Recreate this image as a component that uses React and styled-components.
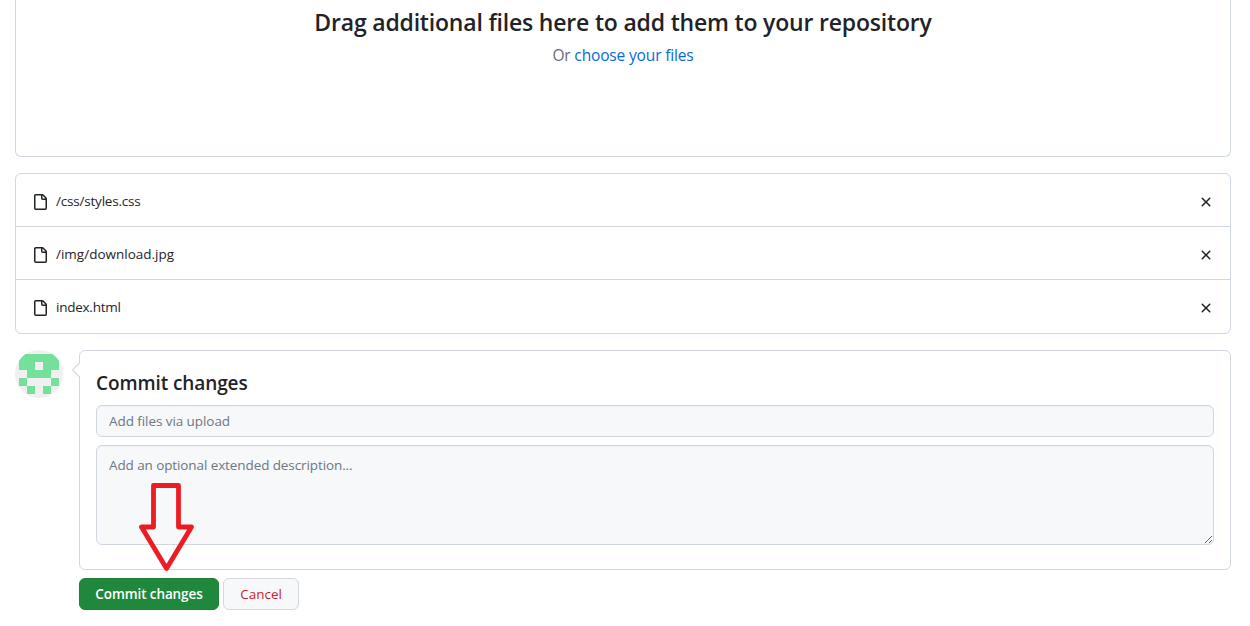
import React from 'react';
import styled, { createGlobalStyle } from 'styled-components';

const GlobalStyle = createGlobalStyle`
  *, *::before, *::after { box-sizing: border-box; }
  body {
    margin: 0;
    background: #ffffff;
    color: #1f2328;
    font: 13.5px/21px "Open Sans", "Noto Sans", sans-serif;
    overflow: hidden;
  }
`;

const Page = styled.main`
  position: relative;
  height: 626px;
  padding: 0 19px 0 15px;
  overflow: hidden;
`;

const Panel = styled.section`
  border: 1px solid #d0d7de;
  border-radius: 6px;
  background: #ffffff;
`;

const DropZone = styled(Panel)`
  height: 157px;
  padding-top: 4px;
  border-top: 0;
  border-radius: 0 0 6px 6px;
  text-align: center;
`;

const DropTitle = styled.h2`
  margin: 0;
  font-size: 23px;
  line-height: 36px;
  font-weight: 600;
  letter-spacing: ${(p) => p.$track}px;
`;

const DropHint = styled.p`
  margin: 3px 0 0;
  color: #656d76;
  font-size: 15.5px;
  line-height: 25px;
  letter-spacing: ${(p) => p.$track}px;
`;

const Link = styled.a`
  color: #0969da;
  text-decoration: none;
`;

const FileList = styled(Panel)`
  margin-top: 16px;
  height: 161px;
`;

const FileRow = styled.div`
  display: flex;
  align-items: center;
  height: 53px;
  padding: 3px 16px 0;
  & + & { border-top: 1px solid #d0d7de; }
  &:first-child { height: 52px; }
`;

const FileName = styled.span`
  flex: 1;
  margin-left: 8px;
  letter-spacing: ${(p) => p.$track}px;
`;

const IconButton = styled.button`
  display: flex;
  padding: 0;
  border: 0;
  background: none;
  color: #1f2328;
`;

const CommitArea = styled.div`
  display: flex;
  gap: 16px;
  margin-top: 16px;
`;

const Avatar = styled.svg`
  width: 48px;
  height: 48px;
  flex: none;
  border-radius: 50%;
`;

const CommitForm = styled.form`
  flex: 1;
`;

const CommitPanel = styled(Panel)`
  position: relative;
  height: 220px;
  padding: 17px 16px 0;
`;

const Caret = styled.svg`
  position: absolute;
  left: -8px;
  top: 10px;
`;

const CommitTitle = styled.h3`
  margin: 0 0 7px;
  font-size: 19px;
  line-height: 30px;
  font-weight: 600;
  letter-spacing: ${(p) => p.$track}px;
`;

const Field = styled.input`
  display: block;
  width: 100%;
  height: ${(p) => p.$height}px;
  padding: 5px 12px;
  border: 1px solid #d0d7de;
  border-radius: 6px;
  background: #f6f8fa;
  box-shadow: inset 0 1px 0 rgba(208, 215, 222, 0.2);
  font: inherit;
  line-height: 20px;
  letter-spacing: ${(p) => p.$track}px;
  resize: vertical;
  &::placeholder { color: #6e7781; opacity: 1; }
`;

const Description = styled(Field)`
  margin-top: 8px;
  padding-top: 9px;
`;

const Actions = styled.div`
  display: flex;
  gap: 4px;
  margin-top: 8px;
`;

const Button = styled.button`
  width: ${(p) => p.$width}px;
  height: 32px;
  padding: 0;
  border: 1px solid ${(p) => (p.$primary ? '#1f7f37' : '#d5d8da')};
  border-radius: 6px;
  background: ${(p) => (p.$primary ? '#1f883d' : '#f6f8fa')};
  color: ${(p) => (p.$primary ? '#ffffff' : '#cf222e')};
  font: 13.5px/20px "Open Sans", "Noto Sans", sans-serif;
  font-weight: ${(p) => (p.$primary ? 600 : 500)};
  letter-spacing: ${(p) => p.$track}px;
  white-space: nowrap;
`;

const Pointer = styled.svg`
  position: absolute;
  left: 136px;
  top: 480px;
  pointer-events: none;
`;

const files = [
  { name: '/css/styles.css', track: -0.2 },
  { name: '/img/download.jpg', track: 0 },
  { name: 'index.html', track: -0.25 },
];

const identicon = ['11111', '11011', '01110', '10001', '01010'];

const FileIcon = () => (
  <svg width="16" height="16" viewBox="0 0 16 16" fill="#1f2328">
    <path d="M2 1.75C2 .784 2.784 0 3.75 0h6.586c.464 0 .909.184 1.237.513l2.914 2.914c.329.328.513.773.513 1.237v9.586A1.75 1.75 0 0 1 13.25 16h-9.5A1.75 1.75 0 0 1 2 14.25Zm1.75-.25a.25.25 0 0 0-.25.25v12.5c0 .138.112.25.25.25h9.5a.25.25 0 0 0 .25-.25V6h-2.75A1.75 1.75 0 0 1 9 4.25V1.5Zm6.75.062V4.25c0 .138.112.25.25.25h2.688l-.011-.013-2.914-2.914-.013-.011Z" />
  </svg>
);

const CloseIcon = () => (
  <svg width="16" height="16" viewBox="0 0 16 16" fill="currentColor">
    <path d="M3.72 3.72a.75.75 0 0 1 1.06 0L8 6.94l3.22-3.22a.749.749 0 0 1 1.275.326.749.749 0 0 1-.215.734L9.06 8l3.22 3.22a.749.749 0 0 1-.326 1.275.749.749 0 0 1-.734-.215L8 9.06l-3.22 3.22a.751.751 0 0 1-1.042-.018.751.751 0 0 1-.018-1.042L6.94 8 3.72 4.78a.75.75 0 0 1 0-1.06Z" />
  </svg>
);

export default function App() {
  return (
    <Page>
      <GlobalStyle />
      <DropZone>
        <DropTitle $track={-0.19}>Drag additional files here to add them to your repository</DropTitle>
        <DropHint $track={-0.15}>Or <Link>choose your files</Link></DropHint>
      </DropZone>

      <FileList>
        {files.map((f) => (
          <FileRow key={f.name}>
            <FileIcon />
            <FileName $track={f.track}>{f.name}</FileName>
            <IconButton type="button" aria-label="Remove file"><CloseIcon /></IconButton>
          </FileRow>
        ))}
      </FileList>

      <CommitArea>
        <Avatar viewBox="0 0 48 48" shapeRendering="crispEdges">
          <rect width="48" height="48" fill="#f0f0f0" />
          {identicon.flatMap((row, y) =>
            [...row].map((cell, x) =>
              cell === '1' ? (
                <rect key={`${x}-${y}`} x={4 + x * 8} y={4 + y * 8} width="8" height="8" fill="#74e09b" />
              ) : null
            )
          )}
        </Avatar>
        <CommitForm>
          <CommitPanel>
            <Caret width="9" height="18" viewBox="0 0 9 18">
              <path d="M9 1 .5 9 9 17Z" fill="#ffffff" />
              <path d="M7.7 1.8.5 9l7.2 7.2" fill="none" stroke="#d0d7de" strokeWidth="1.2" />
            </Caret>
            <CommitTitle $track={-0.1}>Commit changes</CommitTitle>
            <Field $height={32} $track={-0.07} placeholder="Add files via upload" />
            <Description as="textarea" $height={100} $track={-0.1} placeholder="Add an optional extended description..." />
          </CommitPanel>
          <Actions>
            <Button type="button" $primary $width={140} $track={-0.1}>Commit changes</Button>
            <Button type="button" $width={76} $track={0}>Cancel</Button>
          </Actions>
        </CommitForm>
      </CommitArea>

      <Pointer width="61" height="94" viewBox="136 480 61 94">
        <path
          d="M153.5 485.5h25V527h13l-25 41.5-25-41.5h12Z"
          fill="none"
          stroke="#ed1c24"
          strokeWidth="4.8"
          strokeLinejoin="round"
        />
      </Pointer>
    </Page>
  );
}
